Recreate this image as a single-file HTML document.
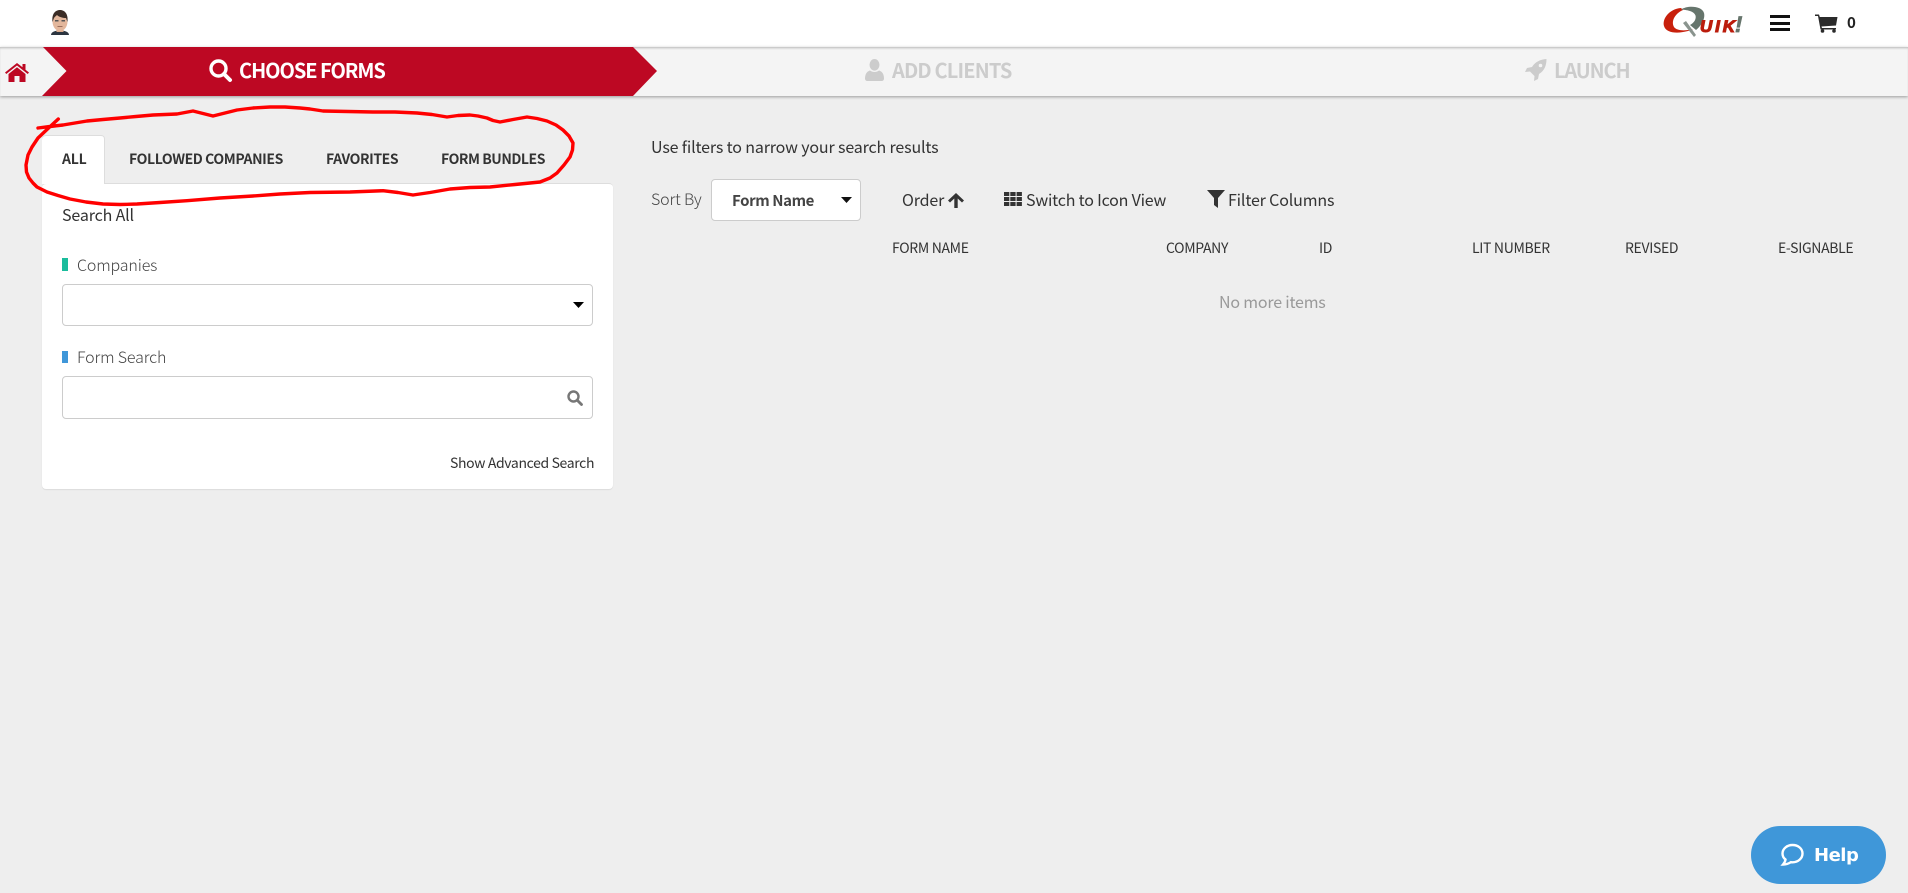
<!DOCTYPE html>
<html lang="en">
<head>
<meta charset="utf-8">
<title>Choose Forms</title>
<style>
html,body{margin:0;padding:0;width:1908px;height:893px;overflow:hidden;background:#eee;font-family:"Noto Sans CJK JP","Liberation Sans",sans-serif;color:#333}
.t{position:absolute;white-space:nowrap;height:20px;line-height:20px;font-size:16px;letter-spacing:-.15px}
.h{font-size:14px;letter-spacing:-.33px}
.b{font-size:14px;font-weight:700;letter-spacing:-.4px}
.n{font-size:20px;font-weight:700;letter-spacing:-1.05px}
.a{position:absolute}
svg{position:absolute;display:block;overflow:visible}
</style>
</head>
<body>
<div class="a" style="left:0;top:0;width:1908px;height:47px;background:#fff"></div>
<div class="a" style="left:0;top:47px;width:1908px;height:49px;background:#f4f4f4;box-shadow:0 1px 3px rgba(0,0,0,.35),inset 0 2px 2px -1px rgba(0,0,0,.25)"></div>

<svg style="left:0;top:47px" width="680" height="49"><polygon points="43,0 633,0 657,24 633,49 42,49 66.500,24" fill="#bd0823"/></svg>

<!-- avatar -->
<svg style="left:50px;top:10px" width="20" height="25" viewBox="0 0 20 25">
<path d="M1 25c0-3 4-4.500 9-4.500s9 1.500 9 4.500z" fill="#2c3540"/>
<rect x="6.500" y="17" width="7" height="5" fill="#d9a98c"/>
<ellipse cx="10" cy="11.500" rx="7.500" ry="9.500" fill="#e3b79c"/>
<path d="M2.500 12C1.500 3 6 0 10 0s8.500 3 7.500 12l-1.500-4c-3 0-7-1-9-3-1 1-2.500 2-3 3z" fill="#3a2c25"/>
<rect x="5" y="10" width="3.500" height="1.500" fill="#555"/><rect x="11.500" y="10" width="3.500" height="1.500" fill="#555"/>
<rect x="7.500" y="16" width="5" height="1" fill="#9a6e5c"/>
</svg>

<!-- logo -->
<svg style="left:1663px;top:7px" width="84" height="30" viewBox="0 0 84 30">
<path d="M18 1C6 2-1 12 1 19c2 7 13 8 24 5 2-.5 4-1.500 5-2-8 2-16 2-19-2C8 15 11 7 20 3z" fill="#c8200c"/>
<path d="M18 2.500C25-2 39-1 41 6c1.500 6-3 13-8 17l-6-5c4-2 6.500-6 5.500-9.500C31 4 24 3 18 2.500z" fill="#66756c"/>
<path d="M20 16l3-2 10 14-2 2z" fill="#8a948e"/>
<text x="37" y="25" font-family="Liberation Sans,sans-serif" font-size="17" font-weight="700" font-style="italic" fill="#bb1c0c" stroke="#bb1c0c" stroke-width="1.100" textLength="35">UIK</text>
<text x="72" y="25" font-family="Liberation Sans,sans-serif" font-size="22" font-weight="700" font-style="italic" fill="#66756c" stroke="#66756c" stroke-width=".8">!</text>
</svg>

<!-- hamburger -->
<div class="a" style="left:1770px;top:15px;width:20px;height:3px;background:#111"></div>
<div class="a" style="left:1770px;top:21.500px;width:20px;height:3px;background:#111"></div>
<div class="a" style="left:1770px;top:28px;width:20px;height:3px;background:#111"></div>

<!-- cart -->
<svg style="left:1815px;top:14px" width="23" height="19" viewBox="0 0 23 19">
<path d="M0 .5h4l.8 2.500H22.500l-1.500 8.500-14.500 1 .5 1.500H21v1.500H5.500L3 2H0z" fill="#2b2b2b"/>
<circle cx="7.500" cy="17" r="1.800" fill="#2b2b2b"/><circle cx="19" cy="17" r="1.800" fill="#2b2b2b"/>
</svg>
<div class="t" style="left:1847px;top:13px;font-size:15px;font-weight:700;color:#222">0</div>

<!-- home -->
<svg style="left:5px;top:63px" width="24" height="19" viewBox="0 0 24 19">
<path d="M12 0L0 9.500l1.300 1.500L12 2.500 22.700 11 24 9.500 20.500 6.700V1h-3v3.300z" fill="#bd0823"/>
<path d="M12 4.200L3.500 11v8H9.500v-6h5v6h6v-8z" fill="#bd0823"/>
</svg>

<!-- choose forms -->
<svg style="left:209px;top:59px" width="23" height="23" viewBox="0 0 23 23">
<circle cx="9.500" cy="9.500" r="7.500" fill="none" stroke="#fff" stroke-width="3.400"/>
<path d="M15 15l6 6" stroke="#fff" stroke-width="4" stroke-linecap="round"/>
</svg>
<div class="t n" style="left:239px;top:60px;color:#fff">CHOOSE FORMS</div>

<!-- add clients -->
<svg style="left:865px;top:59px" width="19" height="22" viewBox="0 0 19 22">
<ellipse cx="9.500" cy="5.800" rx="5" ry="5.800" fill="#ccc"/>
<path d="M0 19.500C0 14 3 12 5 11.500c2.500 2 6.500 2 9 0 2 .5 5 2.500 5 8 0 1.500-1 2.500-2.500 2.500h-14C1 22 0 21 0 19.500z" fill="#ccc"/>
</svg>
<div class="t n" style="left:892px;top:60px;color:#ccc;letter-spacing:-.85px">ADD CLIENTS</div>

<!-- launch -->
<svg style="left:1525px;top:59px" width="22" height="22" viewBox="0 0 22 22">
<path d="M21.500 0C15 .5 10 3 7 8L2 9 0 13l5-.5 4.500 4.500-.5 5 4-2 1-5c5-3 7.500-8 7.500-15z" fill="#ccc"/>
<circle cx="15.500" cy="6.500" r="1.800" fill="#f4f4f4"/>
</svg>
<div class="t n" style="left:1554px;top:60px;color:#ccc;letter-spacing:-1.1px">LAUNCH</div>

<!-- panel -->
<div class="a" style="left:42px;top:183px;width:571px;height:306px;background:#fff;border-radius:4px;box-shadow:0 1px 1px rgba(0,0,0,.08);border-top:1px solid #ddd;box-sizing:border-box"></div>
<div class="a" style="left:42px;top:135px;width:63px;height:49px;background:#fff;border-radius:4px 4px 0 0;box-shadow:inset 0 1px 0 #ddd,inset -1px 0 0 #ddd"></div>

<div class="t b" style="left:62px;top:149px;letter-spacing:-.25px">ALL</div>
<div class="t b" style="left:129px;top:149px">FOLLOWED COMPANIES</div>
<div class="t b" style="left:326px;top:149px;letter-spacing:-.4px">FAVORITES</div>
<div class="t b" style="left:441px;top:149px;letter-spacing:-.45px">FORM BUNDLES</div>

<div class="t" style="left:62px;top:204px">Search All</div>

<div class="a" style="left:62px;top:258px;width:6px;height:13px;background:#1abc9c"></div>
<div class="t" style="left:77px;top:254px;font-weight:300;color:#444">Companies</div>
<div class="a" style="left:62px;top:284px;width:531px;height:42px;box-sizing:border-box;border:1px solid #ccc;border-radius:4px;background:#fff"></div>
<svg style="left:573px;top:302px" width="11" height="6"><polygon points="0,0 11,0 5.500,6" fill="#000"/></svg>

<div class="a" style="left:62px;top:351px;width:6px;height:12px;background:#3f97d9"></div>
<div class="t" style="left:77px;top:346px;font-weight:300;color:#444">Form Search</div>
<div class="a" style="left:62px;top:376px;width:531px;height:43px;box-sizing:border-box;border:1px solid #ccc;border-radius:4px;background:#fff"></div>
<svg style="left:567px;top:390px" width="16" height="16" viewBox="0 0 16 16">
<circle cx="6.500" cy="6.500" r="5" fill="none" stroke="#777" stroke-width="2.400"/>
<path d="M10.500 10.500l4 4" stroke="#777" stroke-width="2.800" stroke-linecap="round"/>
</svg>
<div class="t h" style="left:450px;top:453px;letter-spacing:-.36px">Show Advanced Search</div>

<!-- right -->
<div class="t" style="left:651px;top:136px">Use filters to narrow your search results</div>
<div class="t" style="left:651px;top:188px;font-weight:300;color:#444">Sort By</div>
<div class="a" style="left:711px;top:179px;width:150px;height:42px;box-sizing:border-box;border:1px solid #ccc;border-radius:4px;background:#fff"></div>
<div class="t" style="left:732px;top:191px;font-size:15px;font-weight:700;color:#444;letter-spacing:-.4px">Form Name</div>
<svg style="left:841px;top:197px" width="11" height="6"><polygon points="0,0 11,0 5.500,6" fill="#111"/></svg>

<div class="t" style="left:902px;top:189px">Order</div>
<svg style="left:948px;top:193px" width="16" height="15" viewBox="0 0 16 15"><path d="M8 0l8 7.500-2 2-4.300-4V15H6.300V5.500L2 9.500l-2-2z" fill="#333"/></svg>
<svg style="left:1004px;top:192px" width="18" height="14" viewBox="0 0 18 14" fill="#333">
<rect width="5.300" height="4"/><rect x="6.300" width="5.300" height="4"/><rect x="12.600" width="5.300" height="4"/>
<rect y="5" width="5.300" height="4"/><rect x="6.300" y="5" width="5.300" height="4"/><rect x="12.600" y="5" width="5.300" height="4"/>
<rect y="10" width="5.300" height="4"/><rect x="6.300" y="10" width="5.300" height="4"/><rect x="12.600" y="10" width="5.300" height="4"/>
</svg>
<div class="t" style="left:1026px;top:189px;letter-spacing:-.2px">Switch to Icon View</div>
<svg style="left:1207px;top:190px" width="18" height="18" viewBox="0 0 18 18"><path d="M0 0h18L11 8v10L7 15V8z" fill="#333"/></svg>
<div class="t" style="left:1228px;top:189px">Filter Columns</div>

<div class="t h" style="left:892px;top:238px">FORM NAME</div>
<div class="t h" style="left:1166px;top:238px">COMPANY</div>
<div class="t h" style="left:1319px;top:238px">ID</div>
<div class="t h" style="left:1472px;top:238px">LIT NUMBER</div>
<div class="t h" style="left:1625px;top:238px">REVISED</div>
<div class="t h" style="left:1778px;top:238px">E-SIGNABLE</div>
<div class="t" style="left:1219px;top:291px;color:#999;letter-spacing:-.2px">No more items</div>

<!-- scribble -->
<svg style="left:0;top:0" width="1908" height="893">
<polyline fill="none" stroke="#f00" stroke-width="3.400" stroke-linecap="round" stroke-linejoin="round" points="58.300,119 48.300,128.300 38,138 32,147 28,155 26,165 26.500,172 29,178 33,183 37,187 47,192 58,195.500 70,199 86,202 103,204 120,204.500 137,204 160,202.500 187,200.700 220,198 253,196 280,194 310,192.500 350,192 383,190.700 398,192.500 413,195 430,192.500 450,189 470,187.500 490,187 515,184.500 540,182 550,178 557,173 564,165 570,157 572.500,150 573,143 569,136 563,130 556,125 547,121 537,118.500 527,117 513,119.500 500,122 493,120.500 487,118 478,116 470,115 458,115.500 447,117 432,114.500 417,113 395,112 373,112 348,111.500 323,111 310,109 300,108 285,107 270,107 253,108 237,110 225,113 213,116 203,113.500 193,111 185,112.500 177,114 165,114.500 153,115 136,116.500 120,118 103,119.500 87,121 75,123 63,125 50,126.500 38,128"/>
</svg>

<!-- help -->
<div class="a" style="left:1751px;top:826px;width:135px;height:58px;border-radius:29px;background:#3f97d9"></div>
<svg style="left:1780px;top:843px" width="24" height="24" viewBox="0 0 24 24">
<path d="M12.500 2C7 2 2.500 5.800 2.500 10.500c0 2.500 1 4.500 3 6-.2 1.800-1 3.300-2.500 5 3 0 6-1 7.800-2.300 .5 .1 1.100 .1 1.700 .1 5.500 0 10-3.800 10-8.800S18 2 12.500 2z" fill="none" stroke="#fff" stroke-width="2.400"/>
</svg>
<div class="t" style="left:1814px;top:846px;font-family:'DejaVu Sans',sans-serif;font-size:18px;font-weight:700;color:#fff;letter-spacing:-.5px">Help</div>
</body>
</html>
